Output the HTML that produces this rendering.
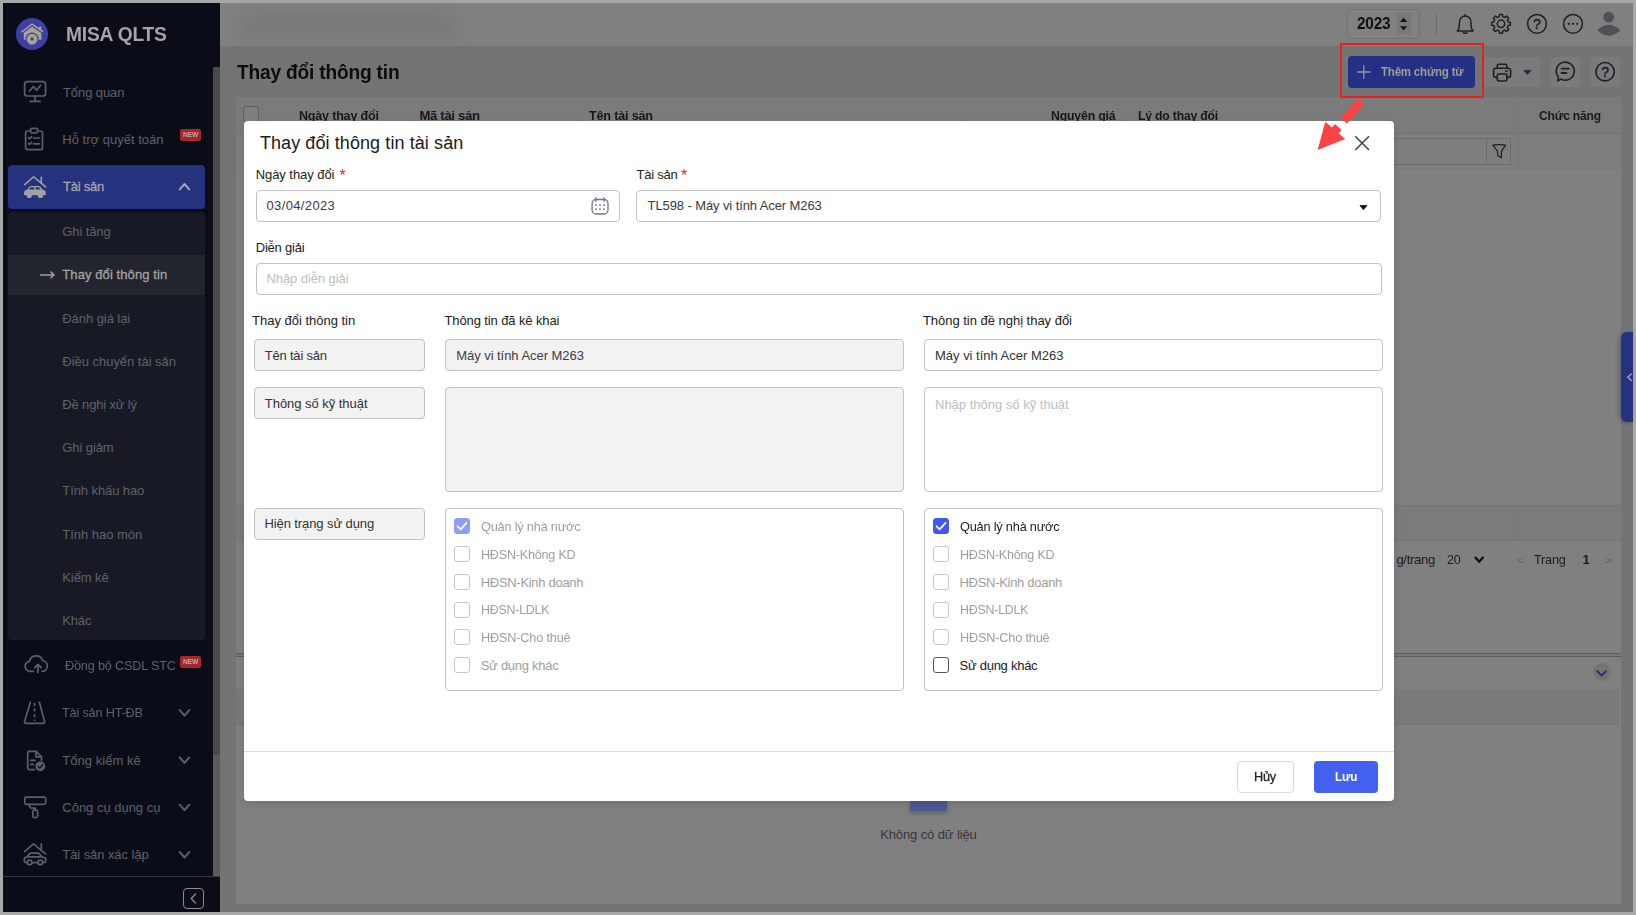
<!DOCTYPE html>
<html lang="vi">
<head>
<meta charset="utf-8">
<title>MISA QLTS - Thay đổi thông tin tài sản</title>
<style>
*{box-sizing:border-box;margin:0;padding:0}
html,body{width:1636px;height:915px;overflow:hidden}
body{position:relative;background:#a8a8a8;font-family:"Liberation Sans",Arial,sans-serif;font-size:13px;color:#212121}
.a{position:absolute}
.t{position:absolute;white-space:pre;line-height:20px;height:20px;transform-origin:0 50%}
svg{position:absolute;overflow:visible}
#app{left:3px;top:3px;width:1630px;height:909px;background:#727476;overflow:hidden}
/* sidebar */
#sidebar{left:3px;top:3px;width:217px;height:909px;background:#0a0d18}
.sb-active{left:8px;top:165px;width:197px;height:44px;background:#25327f;border-radius:4px}
.sb-sub{left:8px;top:211.5px;width:197px;height:428.5px;background:#171a24;border-radius:4px}
.sb-sub-active{left:8px;top:255px;width:197px;height:40px;background:#22242e}
.new{background:#a32828;border-radius:2px;width:21px;height:12px}
.scroll-thumb{left:213px;top:67px;width:7px;height:688px;background:#494a48}
.scroll-track{left:213px;top:755px;width:7px;height:121px;background:#5c5b59}
.sb-foot{left:3px;top:876px;width:217px;height:36px;background:#0b0d19;border-top:1px solid #353743}
.collapse{left:183px;top:888px;width:21px;height:21px;border:1px solid #8c8c8c;border-radius:4px}
/* topbar */
#topbar{left:220px;top:3px;width:1413px;height:42.5px;background:#808080}
.blur{left:240px;top:13px;width:216px;height:27px;background:#787878;filter:blur(8px);border-radius:8px}
.year{left:1347px;top:8.5px;width:72.5px;height:30px;border:1px solid #747474;border-radius:4px;background:#818181}
.spin{left:1397px;top:13px;width:14px;height:21px;background:#797979;border-radius:2px}
.vsep{left:1436px;top:14px;width:1px;height:21px;background:#6c6c6c}
/* page header buttons */
.btn-add{left:1348px;top:56px;width:127px;height:32px;background:#233083;border-radius:4px}
.btn-g{top:57px;height:30px;background:#7a7b7d;border-radius:4px}
/* table */
#grid{left:236px;top:97px;width:1385px;height:807px;background:#808080}
.th{left:236px;top:97px;width:1385px;height:36.5px;background:#7b7b7c;border-bottom:1px solid #747475}
.fr{left:236px;top:133.5px;width:1385px;height:35px;background:#7e7e7e;border-bottom:1px solid #7a7a7a}
.cs{top:97px;width:1px;height:71px;background:#777778}
.chk0{left:243px;top:106px;width:16px;height:16px;border:1px solid #5f5f5f;border-radius:3px;background:#7f7f7f}
.fbox{left:1240px;top:137.5px;width:270.5px;height:27px;border:1px solid #6b6b6b;background:#7e7e7e}
.fsep{left:1486px;top:137.5px;width:1px;height:27px;background:#6b6b6b}
.sumrow{left:236px;top:505px;width:1385px;height:36px;background:#7b7b7b;border-top:1px solid #757575;border-bottom:1px solid #757575}
.split1{left:236px;top:653px;width:1385px;height:1px;background:#5c5c5c}
.split2{left:236px;top:656px;width:1385px;height:1px;background:#5c5c5c}
.splitgap{left:236px;top:654px;width:1385px;height:2px;background:#7a7a7a}
.circ{left:1592.5px;top:663px;width:18px;height:18px;border-radius:50%;background:#747474}
.dhead{left:236px;top:688.5px;width:1383px;height:36px;background:#7a7a7a;border-bottom:1px solid #747474}
.nodata-ic{left:910px;top:800px;width:37px;height:11px;background:#4f5a94;border-radius:0 0 2px 2px;box-shadow:0 3px 4px rgba(80,80,80,.5)}
.tab{left:1621px;top:332px;width:12px;height:90px;background:#25327f;border-radius:6px 0 0 6px;box-shadow:-2px 1px 4px rgba(0,0,0,.22)}
/* annotation */
.redbox{left:1340.2px;top:43.1px;width:143.8px;height:54.8px;border:2.6px solid #e8211e}
/* modal */
#modal{left:244px;top:121px;width:1150px;height:680px;background:#fff;border-radius:4px;box-shadow:0 3px 9px rgba(0,0,0,.13)}
.inp{border:1px solid #c2c2c2;border-radius:4px;background:#fff}
.dis{background:#f2f2f2}
.mline{left:244px;top:751px;width:1150px;height:1px;background:#d9dbe3}
.cb{width:16px;height:16px;border-radius:3px;border:1px solid #c6c6c6;background:#fff}
.cb.on{border-color:#555}
.cb.ck{background:#4059f0;border-color:#4059f0}
.cb.ckd{background:#8e9df6;border-color:#8e9df6}
.btn-cancel{left:1237px;top:761px;width:57px;height:32px;border:1px solid #d6d8e0;border-radius:4px;background:#fff}
.btn-save{left:1314px;top:761px;width:64px;height:32px;border-radius:4px;background:#4360ee}
</style>
</head>
<body>
<div id="app" class="a"></div>

<!-- ======= SIDEBAR ======= -->
<div id="sidebar" class="a"></div>
<div class="a sb-active"></div>
<div class="a sb-sub"></div>
<div class="a sb-sub-active"></div>
<div class="a new" style="left:180px;top:129px"></div>
<div class="a new" style="left:180px;top:656px"></div>
<div class="a scroll-thumb"></div>
<div class="a scroll-track"></div>
<div class="a sb-foot"></div>
<div class="a collapse"></div>
<svg class="a" style="left:0;top:0" width="1636" height="915" viewBox="0 0 1636 915" fill="none" stroke-linecap="round" stroke-linejoin="round" >
<circle cx="32" cy="34" r="16" fill="#3b3fa3"/>
<g fill="#a6a695" stroke="none"><path d="M23.8,32.2 L32.1,26 L41.4,32.6 L41.4,39.8 L23.8,39.8 Z"/><rect x="39" y="26.6" width="2.3" height="4"/></g>
<polyline points="22,31.8 32.1,24.2 42.8,31.6" stroke="#a6a695" stroke-width="1.5"/>
<path d="M23.2,32.9 L32.1,26.1 L42,33" stroke="#3b3fa3" stroke-width="1"/>
<circle cx="32.1" cy="39.2" r="6.6" fill="#3b3fa3"/>
<circle cx="32.1" cy="39.2" r="5.4" fill="#a6a695"/>
<circle cx="32.1" cy="38.9" r="1.7" fill="#3b3fa3"/>
<g stroke="#5c5e68" stroke-width="1.7"><rect x="24.6" y="81.6" width="21" height="14.4" rx="2.8"/><path d="M35.1,96 V101.3 M30.2,101.4 H40"/><polyline points="29.5,91 33.4,86.6 36.6,90.2 40.6,85.3"/></g>
<g stroke="#5c5e68" stroke-width="1.7"><rect x="25.6" y="131" width="16.9" height="18.6" rx="2"/><rect x="30.6" y="128.4" width="6.9" height="4.4" rx="1.2" fill="#0a0d18"/><path d="M28.6,137.6 l1.1,1.1 l1.9,-2.1 M33.6,138 H39.4 M28.6,143.4 l1.1,1.1 l1.9,-2.1 M33.6,143.8 H39.4"/></g>
<g stroke="#a2a2a2" stroke-width="1.5"><polyline points="24.6,184.6 33.7,176.8 45.6,186.9"/><path d="M41.3,177.2 V183"/></g>
<g fill="#a2a2a2" stroke="none"><path d="M24.1,195.3 V192.6 Q24.1,190.1 26.9,189.7 L29.3,186.7 Q29.9,185.9 31,185.9 H38.6 Q39.7,185.9 40.3,186.7 L42.8,189.7 Q45.7,190.1 45.7,192.6 V195.3 Z"/><circle cx="29.3" cy="195.4" r="2.6"/><circle cx="40.5" cy="195.4" r="2.6"/></g>
<g fill="#25327f" stroke="none"><path d="M30.6,187.3 H34.2 V189.6 H28.8 Z M35.6,187.3 H38.9 L40.7,189.6 H35.6 Z"/></g>
<polyline points="179.7,189.5 184.5,184 189.3,189.5" stroke="#a2a2a2" stroke-width="2"/>
<path d="M40.6,274.9 H54 M50.9,272 L54,274.9 L50.9,277.8" stroke="#a2a2a2" stroke-width="1.5"/>
<g stroke="#5c5e68" stroke-width="1.7"><path d="M33.2,671.4 H29.9 A5.1,5.1 0 0 1 29.4,661.3 A6.9,6.9 0 0 1 42.7,660.5 A5.5,5.5 0 0 1 42.4,671.4 H42.2"/><path d="M38,672.4 V664.6 M34.8,667.6 L38,664.4 L41.2,667.6"/></g>
<g stroke="#5c5e68" stroke-width="1.7"><path d="M30.4,702.2 L24.6,721.2 Q24,723.3 26.2,723.3 H42.9 Q45,723.3 44.5,721.2 L39.4,702.2"/><path d="M34.5,703 V721" stroke-dasharray="3 2.6" stroke-linecap="butt"/></g>
<polyline points="179.7,710.1 184.5,715.6 189.3,710.1" stroke="#5c5e68" stroke-width="2"/>
<g stroke="#5c5e68" stroke-width="1.7"><path d="M34.5,769.6 H29.2 A1.5,1.5 0 0 1 27.7,768.1 V752.8 A1.5,1.5 0 0 1 29.2,751.3 H36 L41.5,756.8 V760.4"/><path d="M36,751.5 V756.8 H41.3"/><path d="M30.6,760.3 H35 M30.6,764.3 H33.4"/></g>
<circle cx="40.3" cy="766.3" r="4.9" fill="#5c5e68"/>
<polyline points="38,766.4 39.7,768.1 42.8,764.7" stroke="#0a0d18" stroke-width="1.3"/>
<polyline points="179.7,757.4 184.5,762.9 189.3,757.4" stroke="#5c5e68" stroke-width="2"/>
<g stroke="#5c5e68" stroke-width="1.7"><rect x="24.7" y="797.2" width="21" height="7.2" rx="1.6"/><path d="M28.4,804.4 L31.2,808.2 H35.2 V810"/><rect x="32.8" y="810.2" width="4.8" height="7.4" rx="1.6"/></g>
<polyline points="179.7,804.7 184.5,810.2 189.3,804.7" stroke="#5c5e68" stroke-width="2"/>
<g stroke="#5c5e68" stroke-width="1.7"><polyline points="24.6,851.6 33.5,843.9 45.5,853.9"/><path d="M41.3,843.8 V850"/><path d="M26.9,862.6 H25.9 Q24.3,862.6 24.3,861 V859.4 Q24.3,857.2 27,856.8 L29.3,853.9 Q29.9,853.1 31,853.1 H37.6 Q38.7,853.1 39.3,853.9 L41.8,856.8 Q45.7,857.2 45.7,859.4 V861 Q45.7,862.6 44.1,862.6 H43 M32.3,862.6 H37.6"/><circle cx="29.6" cy="862.4" r="2.3"/><circle cx="40.3" cy="862.4" r="2.3"/><path d="M28,856.9 H41"/></g>
<polyline points="179.7,852.0 184.5,857.5 189.3,852.0" stroke="#5c5e68" stroke-width="2"/>
<polyline points="195.6,894 191.2,898.5 195.6,903" stroke="#8c8c8c" stroke-width="1.3"/>
</svg>

<!-- ======= TOPBAR ======= -->
<div id="topbar" class="a"></div>
<div class="a blur"></div>
<div class="a year"></div>
<div class="a spin"></div>
<div class="a vsep"></div>
<svg class="a" style="left:0;top:0" width="1636" height="915" viewBox="0 0 1636 915" fill="none" stroke-linecap="round" stroke-linejoin="round" >
<g fill="#161616" stroke="none"><path d="M1400,22 L1403.6,17.6 L1407.2,22 Z M1400,26.2 L1403.6,30.6 L1407.2,26.2 Z"/></g>
<g stroke="#1f1f1f" stroke-width="1.5"><path d="M1457.2,30.9 C1459.4,29.4 1459.4,27 1459.4,23.4 C1459.4,18.6 1462,15.9 1465.2,15.9 C1468.4,15.9 1471,18.6 1471,23.4 C1471,27 1471,29.4 1473.2,30.9 Z"/><path d="M1465.2,14.4 V15.6 M1463.4,32.6 Q1465.2,34 1467,32.6"/></g>
<g stroke="#1f1f1f" stroke-width="1.5"><path d="M1510.38,22.29 L1510.38,25.31 L1508.19,25.56 L1507.33,27.64 L1508.70,29.36 L1506.56,31.50 L1504.84,30.13 L1502.76,30.99 L1502.51,33.18 L1499.49,33.18 L1499.24,30.99 L1497.16,30.13 L1495.44,31.50 L1493.30,29.36 L1494.67,27.64 L1493.81,25.56 L1491.62,25.31 L1491.62,22.29 L1493.81,22.04 L1494.67,19.96 L1493.30,18.24 L1495.44,16.10 L1497.16,17.47 L1499.24,16.61 L1499.49,14.42 L1502.51,14.42 L1502.76,16.61 L1504.84,17.47 L1506.56,16.10 L1508.70,18.24 L1507.33,19.96 L1508.19,22.04 Z"/><circle cx="1501" cy="23.8" r="3.7"/></g>
<circle cx="1537" cy="23.8" r="9.4" stroke="#1f1f1f" stroke-width="1.5"/>
<text x="1537" y="28.6" text-anchor="middle" font-size="14" font-family="Liberation Sans, Arial, sans-serif" fill="#1f1f1f" stroke="#1f1f1f" stroke-width="0.45">?</text>
<circle cx="1573" cy="23.8" r="9.4" stroke="#1f1f1f" stroke-width="1.5"/>
<g fill="#1f1f1f" stroke="none"><circle cx="1568.8" cy="23.8" r="1.15"/><circle cx="1573" cy="23.8" r="1.15"/><circle cx="1577.2" cy="23.8" r="1.15"/></g>
<g fill="#4f5156" stroke="none"><circle cx="1608.7" cy="17.2" r="5.4"/><path d="M1597.2,30.3 Q1608.7,19.3 1620.3,30.3 Q1608.7,41.3 1597.2,30.3 Z"/></g>
</svg>

<!-- ======= PAGE ======= -->
<div class="a btn-add"></div>
<div class="a btn-g" style="left:1484px;width:56px"></div>
<div class="a btn-g" style="left:1550px;width:30px"></div>
<div class="a btn-g" style="left:1590px;width:30px"></div>
<div id="grid" class="a"></div>
<div class="a th"></div>
<div class="a fr"></div>
<div class="a cs" style="left:268px"></div>
<div class="a cs" style="left:408.5px"></div>
<div class="a cs" style="left:578.5px"></div>
<div class="a cs" style="left:966px"></div>
<div class="a cs" style="left:1125.5px"></div>
<div class="a cs" style="left:1514.5px"></div>
<div class="a cs" style="left:1517.5px"></div>
<div class="a chk0"></div>
<div class="a fbox"></div>
<div class="a fsep"></div>
<div class="a sumrow"></div>
<div class="a cs" style="left:1514.5px;top:505px;height:36px"></div>
<div class="a cs" style="left:1517.5px;top:505px;height:36px"></div>
<div class="a split1"></div><div class="a splitgap"></div><div class="a split2"></div>
<div class="a circ"></div>
<div class="a dhead"></div>
<div class="a nodata-ic"></div>
<div class="a tab"></div>
<svg class="a" style="left:0;top:0" width="1636" height="915" viewBox="0 0 1636 915" fill="none" stroke-linecap="round" stroke-linejoin="round" >
<path d="M1357.4,72 H1370.2 M1363.8,65.6 V78.4" stroke="#94958f" stroke-width="1.3"/>
<g stroke="#1f1f22" stroke-width="1.6"><path d="M1497.3,68 V65.6 A1.4,1.4 0 0 1 1498.7,64.2 H1505.5 A1.4,1.4 0 0 1 1506.9,65.6 V68"/><path d="M1497.2,77.4 H1496 A2.4,2.4 0 0 1 1493.6,75 V70.6 A2.4,2.4 0 0 1 1496,68.2 H1508.2 A2.4,2.4 0 0 1 1510.6,70.6 V75 A2.4,2.4 0 0 1 1508.2,77.4 H1507"/><rect x="1497.3" y="74" width="9.6" height="7" rx="1.4"/><path d="M1505.6,71 H1507.4"/></g>
<path d="M1524.3,70.4 H1530.9 L1527.6,74.2 Z" fill="#26263c" stroke="#26263c" stroke-width="0.8"/>
<g stroke="#1f1f22" stroke-width="1.6"><path d="M1558.4,77 A9,9 0 1 1 1561,79.1 L1557.9,80.9 Z"/><path d="M1561.6,68.6 H1568.9 M1561.6,73 H1566.4" stroke-width="1.9"/></g>
<circle cx="1605.1" cy="71.7" r="9.2" stroke="#1f1f22" stroke-width="1.6"/>
<text x="1605.1" y="76.6" text-anchor="middle" font-size="14" font-family="Liberation Sans, Arial, sans-serif" fill="#1f1f22" stroke="#1f1f22" stroke-width="0.45">?</text>
<path d="M1492.8,145.2 Q1499.2,144 1505.6,145.2 L1501.4,151.4 V157.8 L1497.6,155.6 V151.4 Z" stroke="#1f1f1f" stroke-width="1.2"/>
<polyline points="1475.5,557.6 1479.2,561.8 1482.9,557.6" stroke="#0c0c0c" stroke-width="2.2"/>
<polyline points="1597.3,671.2 1601.6,675.6 1605.9,671.2" stroke="#1f2f8f" stroke-width="2"/>
<polyline points="1631.2,374 1627.8,377.2 1631.2,380.4" stroke="#9aa0c0" stroke-width="1.5"/>
</svg>
<span class="t" style="left:65.5px;top:24.2px;font-size:19.5px;color:#a5a5a5;font-weight:700;letter-spacing:-0.200px;transform:scaleX(0.9853);">MISA QLTS</span>
<span class="t" style="left:63.0px;top:82.5px;font-size:13px;color:#5f626b;letter-spacing:-0.091px;">Tổng quan</span>
<span class="t" style="left:62.3px;top:129.8px;font-size:13px;color:#5f626b;letter-spacing:0.010px;">Hỗ trợ quyết toán</span>
<span class="t" style="left:182.9px;top:124.6px;font-size:7px;color:#c4a6a6;font-weight:700;letter-spacing:-0.200px;transform:scaleX(0.9531);">NEW</span>
<span class="t" style="left:63.0px;top:177.1px;font-size:13px;color:#a8a8a8;letter-spacing:-0.252px;-webkit-text-stroke:0.28px;">Tài sản</span>
<span class="t" style="left:62.3px;top:222.0px;font-size:13px;color:#5f626b;letter-spacing:-0.114px;">Ghi tăng</span>
<span class="t" style="left:62.3px;top:265.2px;font-size:13px;color:#a4a49f;letter-spacing:0.088px;-webkit-text-stroke:0.28px;">Thay đổi thông tin</span>
<span class="t" style="left:62.3px;top:309.4px;font-size:13px;color:#5f626b;letter-spacing:-0.066px;">Đánh giá lại</span>
<span class="t" style="left:62.3px;top:351.6px;font-size:13px;color:#5f626b;letter-spacing:-0.026px;">Điều chuyển tài sản</span>
<span class="t" style="left:62.3px;top:394.8px;font-size:13px;color:#5f626b;letter-spacing:-0.154px;">Đề nghị xử lý</span>
<span class="t" style="left:62.3px;top:438.0px;font-size:13px;color:#5f626b;letter-spacing:-0.098px;">Ghi giảm</span>
<span class="t" style="left:62.3px;top:481.2px;font-size:13px;color:#5f626b;letter-spacing:-0.090px;">Tính khấu hao</span>
<span class="t" style="left:62.3px;top:525.4px;font-size:13px;color:#5f626b;letter-spacing:-0.019px;">Tính hao mòn</span>
<span class="t" style="left:62.3px;top:567.6px;font-size:13px;color:#5f626b;letter-spacing:-0.103px;">Kiểm kê</span>
<span class="t" style="left:62.3px;top:610.8px;font-size:13px;color:#5f626b;letter-spacing:-0.183px;">Khác</span>
<span class="t" style="left:64.5px;top:656.0px;font-size:13px;color:#5f626b;letter-spacing:-0.200px;transform:scaleX(0.9773);">Đồng bộ CSDL STC</span>
<span class="t" style="left:182.9px;top:652.1px;font-size:7px;color:#c4a6a6;font-weight:700;letter-spacing:-0.200px;transform:scaleX(0.9531);">NEW</span>
<span class="t" style="left:62.3px;top:703.3px;font-size:13px;color:#5f626b;letter-spacing:-0.200px;transform:scaleX(0.9789);">Tài sản HT-ĐB</span>
<span class="t" style="left:62.3px;top:750.6px;font-size:13px;color:#5f626b;letter-spacing:0.039px;">Tổng kiểm kê</span>
<span class="t" style="left:62.3px;top:797.9px;font-size:13px;color:#5f626b;letter-spacing:-0.014px;">Công cụ dụng cụ</span>
<span class="t" style="left:62.3px;top:845.2px;font-size:13px;color:#5f626b;letter-spacing:-0.078px;">Tài sản xác lập</span>
<span class="t" style="left:1357.0px;top:13.9px;font-size:16px;color:#101010;font-weight:700;letter-spacing:-0.200px;transform:scaleX(0.9601);">2023</span>
<span class="t" style="left:236.7px;top:61.9px;font-size:20px;color:#0c0c0c;font-weight:700;letter-spacing:-0.200px;transform:scaleX(0.9569);">Thay đổi thông tin</span>
<span class="t" style="left:1380.5px;top:62.0px;font-size:12px;color:#9d9d94;font-weight:700;letter-spacing:-0.200px;transform:scaleX(0.9569);">Thêm chứng từ</span>
<span class="t" style="left:298.6px;top:105.5px;font-size:13px;color:#17181d;font-weight:700;letter-spacing:-0.200px;transform:scaleX(0.9644);">Ngày thay đổi</span>
<span class="t" style="left:419.5px;top:105.5px;font-size:13px;color:#17181d;font-weight:700;letter-spacing:-0.280px;">Mã tài sản</span>
<span class="t" style="left:589.0px;top:105.5px;font-size:13px;color:#17181d;font-weight:700;letter-spacing:-0.200px;transform:scaleX(0.9723);">Tên tài sản</span>
<span class="t" style="left:1050.9px;top:105.5px;font-size:13px;color:#17181d;font-weight:700;letter-spacing:-0.200px;transform:scaleX(0.9475);">Nguyên giá</span>
<span class="t" style="left:1137.6px;top:105.5px;font-size:13px;color:#17181d;font-weight:700;letter-spacing:-0.200px;transform:scaleX(0.9377);">Lý do thay đổi</span>
<span class="t" style="left:1538.6px;top:105.5px;font-size:13px;color:#17181d;font-weight:700;letter-spacing:-0.200px;transform:scaleX(0.9247);">Chức năng</span>
<span class="t" style="left:1354.0px;top:549.8px;font-size:13px;color:#1b1c24;letter-spacing:-0.200px;transform:scaleX(0.9600);">Số dòn</span>
<span class="t" style="left:1396.4px;top:549.8px;font-size:13px;color:#1b1c24;letter-spacing:-0.275px;">g/trang</span>
<span class="t" style="left:1447.1px;top:549.8px;font-size:13px;color:#1b1c24;letter-spacing:-0.200px;transform:scaleX(0.9599);">20</span>
<span class="t" style="left:1517.2px;top:550.0px;font-size:11.5px;color:#606060;">&lt;</span>
<span class="t" style="left:1534.4px;top:549.8px;font-size:13px;color:#1b1c24;letter-spacing:-0.200px;transform:scaleX(0.9759);">Trang</span>
<span class="t" style="left:1582.6px;top:549.8px;font-size:13px;color:#1b1c24;font-weight:700;">1</span>
<span class="t" style="left:1604.9px;top:550.0px;font-size:11.5px;color:#606060;">&gt;</span>
<span class="t" style="left:880.2px;top:824.5px;font-size:13px;color:#363636;letter-spacing:-0.111px;">Không có dữ liệu</span>

<!-- ======= MODAL ======= -->
<div id="modal" class="a"></div>
<div class="a inp" style="left:256px;top:190px;width:364px;height:32px"></div>
<div class="a inp" style="left:636px;top:190px;width:745px;height:32px"></div>
<div class="a inp" style="left:256px;top:263px;width:1126px;height:32px"></div>
<div class="a inp dis" style="left:254px;top:339px;width:171px;height:32px"></div>
<div class="a inp dis" style="left:445px;top:339px;width:459px;height:32px"></div>
<div class="a inp" style="left:924px;top:339px;width:459px;height:32px"></div>
<div class="a inp dis" style="left:254px;top:387px;width:171px;height:32px"></div>
<div class="a inp dis" style="left:445px;top:387px;width:459px;height:104.5px"></div>
<div class="a inp" style="left:924px;top:387px;width:459px;height:104.5px"></div>
<div class="a inp dis" style="left:254px;top:508px;width:171px;height:32px"></div>
<div class="a inp" style="left:445px;top:508px;width:459px;height:183px"></div>
<div class="a inp" style="left:924px;top:508px;width:459px;height:183px"></div>
<div class="a cb ckd" style="left:454px;top:518.00px"></div>
<div class="a cb" style="left:454px;top:545.85px"></div>
<div class="a cb" style="left:454px;top:573.70px"></div>
<div class="a cb" style="left:454px;top:601.55px"></div>
<div class="a cb" style="left:454px;top:629.40px"></div>
<div class="a cb" style="left:454px;top:657.25px"></div>
<div class="a cb ck" style="left:933px;top:518.00px"></div>
<div class="a cb" style="left:933px;top:545.85px"></div>
<div class="a cb" style="left:933px;top:573.70px"></div>
<div class="a cb" style="left:933px;top:601.55px"></div>
<div class="a cb" style="left:933px;top:629.40px"></div>
<div class="a cb on" style="left:933px;top:657.25px"></div>
<svg class="a" style="left:0;top:0" width="1636" height="915" viewBox="0 0 1636 915" fill="none" stroke-linecap="round" stroke-linejoin="round" >
<polyline points="457.6,526.30 460.7,529.30 466.5,522.90" stroke="#fff" stroke-width="1.8"/>
<polyline points="936.6,526.30 939.7,529.30 945.5,522.90" stroke="#fff" stroke-width="1.8"/>
</svg>
<div class="a mline"></div>
<div class="a btn-cancel"></div>
<div class="a btn-save"></div>
<svg class="a" style="left:0;top:0" width="1636" height="915" viewBox="0 0 1636 915" fill="none" stroke-linecap="round" stroke-linejoin="round" >
<g stroke="#70748f" stroke-width="1.3"><rect x="592.1" y="199.5" width="15.9" height="14.5" rx="4"/><path d="M595.9,197.6 V201.3 M604,197.6 V201.3"/></g>
<g fill="#70748f" stroke="none"><rect x="595.1" y="204.29999999999998" width="1.6" height="1.6"/><rect x="599.2" y="204.29999999999998" width="1.6" height="1.6"/><rect x="603.2" y="204.29999999999998" width="1.6" height="1.6"/><rect x="595.1" y="208.39999999999998" width="1.6" height="1.6"/><rect x="599.2" y="208.39999999999998" width="1.6" height="1.6"/><rect x="603.2" y="208.39999999999998" width="1.6" height="1.6"/></g>
<path d="M1355.7,136.7 L1368.5,149.5 M1368.5,136.7 L1355.7,149.5" stroke="#454545" stroke-width="1.6"/>
<path d="M1360.4,205.6 H1366.8 L1363.6,209.5 Z" fill="#111" stroke="#111" stroke-width="0.9"/>
</svg>
<span class="t" style="left:259.9px;top:133.1px;font-size:18px;color:#1a1a1a;letter-spacing:0.089px;">Thay đổi thông tin tài sản</span>
<span class="t" style="left:255.7px;top:164.7px;font-size:13px;color:#212121;letter-spacing:-0.056px;">Ngày thay đổi</span>
<span class="t" style="left:339.6px;top:165.7px;font-size:16px;color:#ff2020;">*</span>
<span class="t" style="left:636.6px;top:164.7px;font-size:13px;color:#212121;letter-spacing:-0.268px;">Tài sản</span>
<span class="t" style="left:680.9px;top:165.7px;font-size:16px;color:#ff2020;">*</span>
<span class="t" style="left:266.5px;top:195.5px;font-size:13px;color:#3a3a3a;letter-spacing:0.360px;">03/04/2023</span>
<span class="t" style="left:647.6px;top:195.5px;font-size:13px;color:#3a3a3a;letter-spacing:-0.103px;">TL598 - Máy vi tính Acer M263</span>
<span class="t" style="left:255.7px;top:237.7px;font-size:13px;color:#212121;letter-spacing:-0.199px;">Diễn giải</span>
<span class="t" style="left:266.5px;top:268.7px;font-size:13px;color:#bdbdbd;letter-spacing:-0.076px;">Nhập diễn giải</span>
<span class="t" style="left:252.1px;top:310.7px;font-size:13px;color:#212121;letter-spacing:-0.015px;">Thay đổi thông tin</span>
<span class="t" style="left:444.5px;top:310.7px;font-size:13px;color:#212121;letter-spacing:-0.112px;">Thông tin đã kê khai</span>
<span class="t" style="left:922.9px;top:310.7px;font-size:13px;color:#212121;letter-spacing:-0.020px;">Thông tin đề nghị thay đổi</span>
<span class="t" style="left:264.8px;top:345.9px;font-size:13px;color:#333;letter-spacing:-0.212px;">Tên tài sản</span>
<span class="t" style="left:456.2px;top:345.9px;font-size:13px;color:#3d3d3d;letter-spacing:-0.045px;">Máy vi tính Acer M263</span>
<span class="t" style="left:935.0px;top:345.9px;font-size:13px;color:#333;letter-spacing:-0.011px;">Máy vi tính Acer M263</span>
<span class="t" style="left:264.8px;top:393.9px;font-size:13px;color:#333;letter-spacing:-0.039px;">Thông số kỹ thuật</span>
<span class="t" style="left:935.0px;top:395.3px;font-size:13px;color:#bdbdbd;">Nhập thông số kỹ thuật</span>
<span class="t" style="left:264.5px;top:513.9px;font-size:13px;color:#333;letter-spacing:-0.099px;">Hiện trạng sử dụng</span>
<span class="t" style="left:480.7px;top:516.7px;font-size:13px;color:#9e9e9e;letter-spacing:-0.200px;transform:scaleX(0.9795);">Quản lý nhà nước</span>
<span class="t" style="left:959.5px;top:516.7px;font-size:13px;color:#212121;letter-spacing:-0.200px;transform:scaleX(0.9795);">Quản lý nhà nước</span>
<span class="t" style="left:480.7px;top:544.5px;font-size:13px;color:#9e9e9e;letter-spacing:-0.200px;transform:scaleX(0.9659);">HĐSN-Không KD</span>
<span class="t" style="left:959.5px;top:544.5px;font-size:13px;color:#9e9e9e;letter-spacing:-0.200px;transform:scaleX(0.9659);">HĐSN-Không KD</span>
<span class="t" style="left:480.7px;top:573.2px;font-size:13px;color:#9e9e9e;letter-spacing:-0.293px;">HĐSN-Kinh doanh</span>
<span class="t" style="left:959.5px;top:573.2px;font-size:13px;color:#9e9e9e;letter-spacing:-0.293px;">HĐSN-Kinh doanh</span>
<span class="t" style="left:480.7px;top:600.2px;font-size:13px;color:#9e9e9e;letter-spacing:-0.200px;transform:scaleX(0.9502);">HĐSN-LDLK</span>
<span class="t" style="left:959.5px;top:600.2px;font-size:13px;color:#9e9e9e;letter-spacing:-0.200px;transform:scaleX(0.9502);">HĐSN-LDLK</span>
<span class="t" style="left:480.7px;top:628.1px;font-size:13px;color:#9e9e9e;letter-spacing:-0.200px;transform:scaleX(0.9788);">HĐSN-Cho thuê</span>
<span class="t" style="left:959.5px;top:628.1px;font-size:13px;color:#9e9e9e;letter-spacing:-0.200px;transform:scaleX(0.9788);">HĐSN-Cho thuê</span>
<span class="t" style="left:480.7px;top:655.9px;font-size:13px;color:#9e9e9e;letter-spacing:-0.260px;">Sử dụng khác</span>
<span class="t" style="left:959.5px;top:655.9px;font-size:13px;color:#212121;letter-spacing:-0.260px;">Sử dụng khác</span>
<span class="t" style="left:1254.2px;top:767.1px;font-size:13px;color:#1f1f1f;letter-spacing:-0.200px;transform:scaleX(0.9768);-webkit-text-stroke:0.28px;">Hủy</span>
<span class="t" style="left:1334.7px;top:767.1px;font-size:13px;color:#ffffff;font-weight:700;letter-spacing:-0.200px;transform:scaleX(0.8993);">Lưu</span>

<!-- ======= ANNOTATION ======= -->
<div class="a redbox"></div>
<svg class="a" style="left:0;top:0" width="1636" height="915" viewBox="0 0 1636 915" fill="none" stroke-linecap="round" stroke-linejoin="round" >
<circle cx="1358.9" cy="103.9" r="4.2" fill="#fb4343" stroke="none"/>
<path d="M1358.9,103.9 L1343.7,120.6" stroke="#fb4343" stroke-width="8.4" stroke-linecap="butt"/>
<path d="M1338.3,127.1 L1334.8,130.9" stroke="#fb4343" stroke-width="8.8" stroke-linecap="butt"/>
<path d="M1325.3,121.7 L1345.2,138.9 L1317.6,150.1 Z" fill="#fb4343" stroke="none"/>
</svg>
</body>
</html>
